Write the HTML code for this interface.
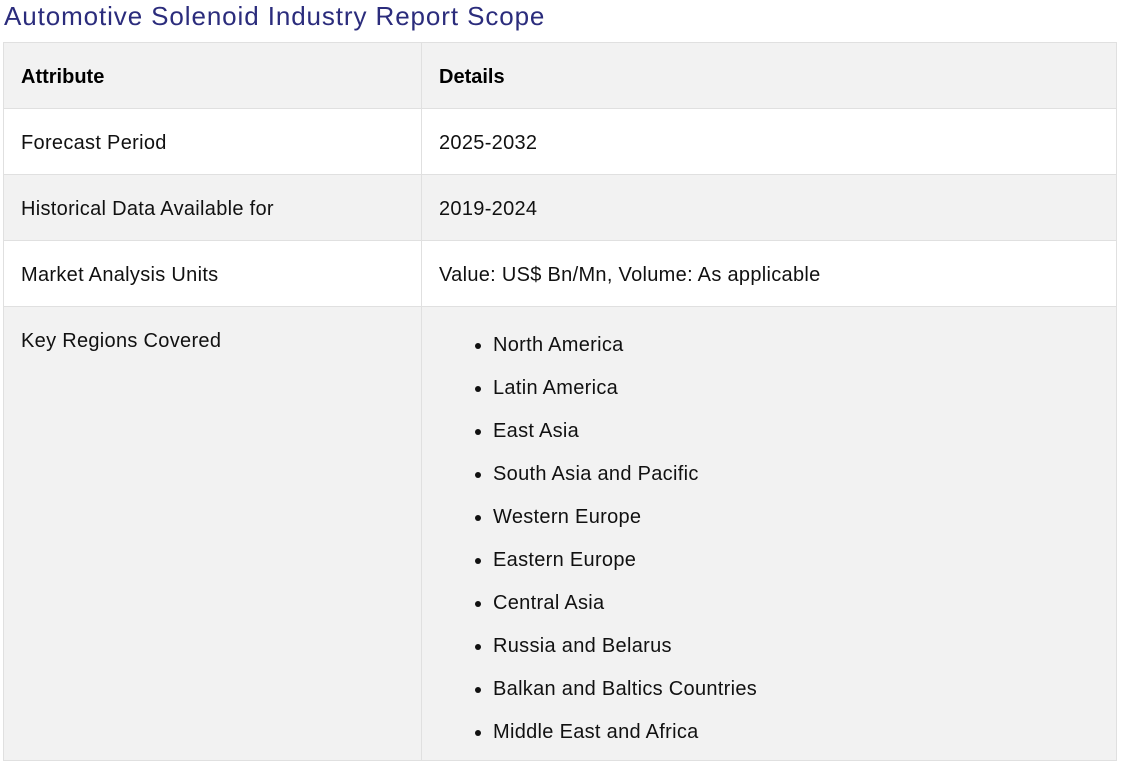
<!DOCTYPE html>
<html><head><meta charset="utf-8"><style>
body{margin:0;background:#fff;font-family:"Liberation Sans",sans-serif;width:1122px;height:706px;overflow:hidden}
h2{margin:0;position:absolute;left:4px;top:1px;font-size:26px;font-weight:normal;color:#2b2c7c;letter-spacing:0.9px;white-space:nowrap}
table{position:absolute;left:3px;top:42px;width:1114px;border-collapse:collapse;font-size:20px;color:#111;letter-spacing:0.3px}
td,th{border:1px solid #e0e0e0;text-align:left;vertical-align:top;padding:23px 17px 0 17px;height:42px;line-height:23px}
th{font-weight:bold;color:#000;letter-spacing:0}
tr.g{background:#f2f2f2}
td:first-child,th:first-child{width:383px}
ul{margin:0;padding:0 0 0 54px;position:relative;top:4px}
li{height:43px;line-height:23px}
</style></head><body>
<h2>Automotive Solenoid Industry Report Scope</h2>
<table>
<tr class="g"><th>Attribute</th><th>Details</th></tr>
<tr><td>Forecast Period</td><td>2025-2032</td></tr>
<tr class="g"><td>Historical Data Available for</td><td>2019-2024</td></tr>
<tr><td>Market Analysis Units</td><td>Value: US$ Bn/Mn, Volume: As applicable</td></tr>
<tr class="g"><td>Key Regions Covered</td><td><ul>
<li>North America</li><li>Latin America</li><li>East Asia</li><li>South Asia and Pacific</li><li>Western Europe</li><li>Eastern Europe</li><li>Central Asia</li><li>Russia and Belarus</li><li>Balkan and Baltics Countries</li><li>Middle East and Africa</li></ul></td></tr>
</table>
</body></html>
